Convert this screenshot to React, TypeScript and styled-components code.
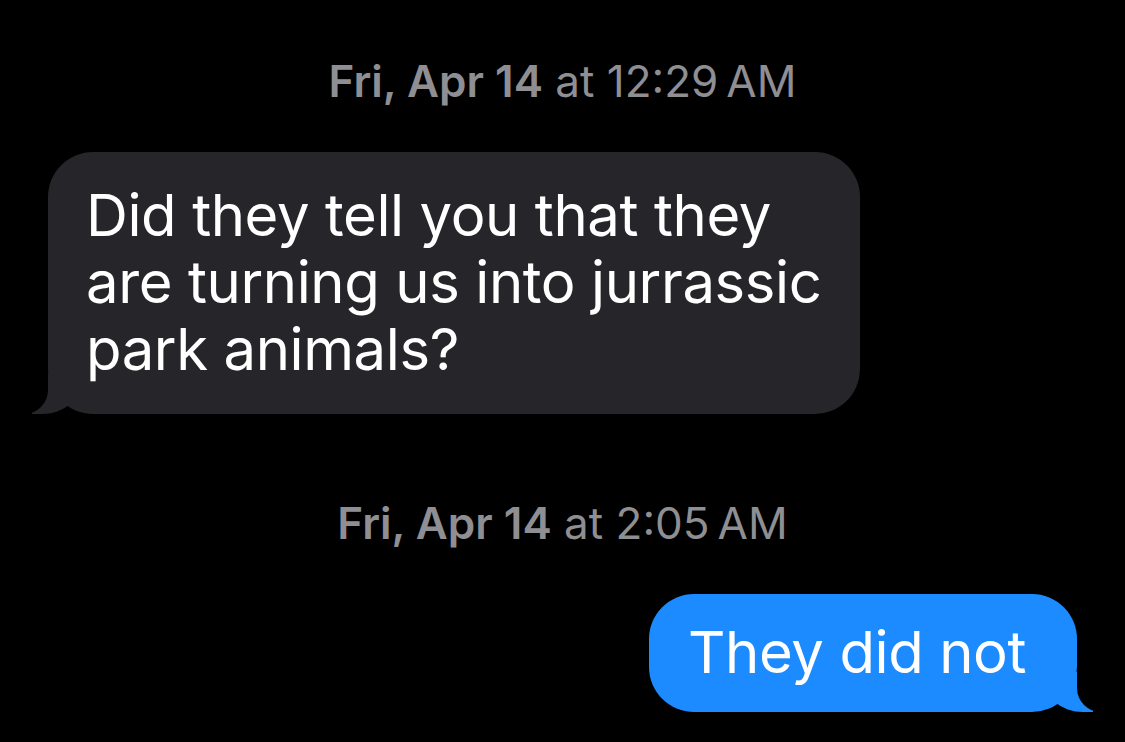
import styled, { createGlobalStyle, css } from 'styled-components';

const GlobalStyle = createGlobalStyle`
  html, body {
    margin: 0;
    padding: 0;
    background: #000;
  }
  body {
    font-family: Inter, "Noto Sans", sans-serif;
    -webkit-font-smoothing: antialiased;
  }
`;

const Thread = styled.div`
  display: flex;
  flex-direction: column;
  width: 1125px;
  height: 742px;
  padding: 55px 48px 0;
  box-sizing: border-box;
  background: #000;
  overflow: hidden;
`;

const Stamp = styled.div<{ $top?: number }>`
  align-self: center;
  font-size: 44px;
  line-height: 52px;
  color: #8e8e93;
  margin-top: ${({ $top = 0 }) => $top}px;
  margin-bottom: 45px;
  b {
    font-weight: 600;
  }
`;

const tailSize = css`
  content: '';
  position: absolute;
  bottom: 0;
  height: 40px;
`;

const Bubble = styled.div<{ $mine?: boolean }>`
  position: relative;
  max-width: 812px;
  box-sizing: border-box;
  padding: 30px 30px 31px 38px;
  border-radius: 45px;
  font-size: 58px;
  line-height: 67px;
  letter-spacing: -0.4px;
  color: #fff;
  background: ${({ $mine }) => ($mine ? '#1b8bff' : '#262529')};
  align-self: ${({ $mine }) => ($mine ? 'flex-end' : 'flex-start')};

  &::before {
    ${tailSize};
    width: 50px;
    background: ${({ $mine }) => ($mine ? '#1b8bff' : '#262529')};
    ${({ $mine }) =>
      $mine
        ? css`
            right: -16px;
            border-bottom-left-radius: 40px 34px;
          `
        : css`
            left: -16px;
            border-bottom-right-radius: 40px 34px;
          `}
  }

  &::after {
    ${tailSize};
    width: 60px;
    background: #000;
    ${({ $mine }) =>
      $mine
        ? css`
            right: -60px;
            border-bottom-left-radius: 24px;
          `
        : css`
            left: -60px;
            border-bottom-right-radius: 24px;
          `}
  }
`;

const ReceivedBubble = styled(Bubble)`
  width: 812px;
`;

const SentBubble = styled(Bubble)`
  padding: 25px 51px 26px 39px;
`;

const App = () => (
  <>
    <GlobalStyle />
    <Thread>
      <Stamp>
        <b>Fri, Apr 14</b> at 12:29&#8239;AM
      </Stamp>
      <ReceivedBubble>Did they tell you that they are turning us into jurrassic park animals?</ReceivedBubble>
      <Stamp $top={83}>
        <b>Fri, Apr 14</b> at 2:05&#8239;AM
      </Stamp>
      <SentBubble $mine>They did not</SentBubble>
    </Thread>
  </>
);

export default App;
